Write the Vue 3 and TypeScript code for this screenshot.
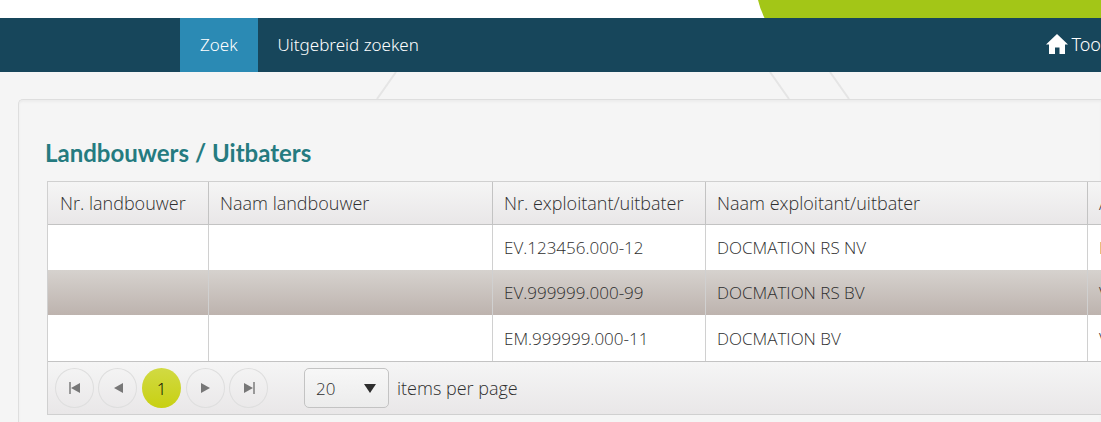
<script setup lang="ts">
import { ref } from 'vue'

interface Operator {
  id: string
  name: string
  address: string
}

const operators: Operator[] = [
  { id: 'EV.123456.000-12', name: 'DOCMATION RS NV', address: 'L' },
  { id: 'EV.999999.000-99', name: 'DOCMATION RS BV', address: 'V' },
  { id: 'EM.999999.000-11', name: 'DOCMATION BV', address: 'V' },
]

const selected = ref(1)
const pageSize = ref(20)
</script>

<template>
  <div class="page">
    <div class="brand" aria-hidden="true">
      <svg class="brand-shape" width="344" height="18" viewBox="0 0 344 18">
        <path d="M1 0H344V18H7.500Q3 9 1 0Z" fill="#a3c617" />
      </svg>
    </div>

    <nav class="nav">
      <a class="nav-link active" href="#zoek">Zoek</a>
      <a class="nav-link" href="#uitgebreid">Uitgebreid zoeken</a>
      <a class="nav-home" href="#home">
        <svg width="22" height="20" viewBox="0 0 22 20" aria-hidden="true">
          <path d="M11 0L22 10.500H19V20H13.500V13.500H9V20H3V10.500H0Z" fill="#fff" />
        </svg>
        <span>Too</span>
      </a>
    </nav>

    <div class="backdrop" aria-hidden="true">
      <svg width="480" height="27" viewBox="0 0 480 27" fill="none" stroke="#e5e5e5" stroke-width="2">
        <path d="M20 0L1 27M394 0L413 27M454 0L473 27" />
      </svg>
    </div>

    <main class="panel">
      <h1 class="title">Landbouwers / Uitbaters</h1>
      <div class="grid">
        <table class="table">
          <colgroup>
            <col class="c-nr" /><col class="c-farmer" /><col class="c-id" /><col class="c-name" /><col />
          </colgroup>
          <thead>
            <tr>
              <th scope="col">Nr. landbouwer</th>
              <th scope="col">Naam landbouwer</th>
              <th scope="col">Nr. exploitant/uitbater</th>
              <th scope="col">Naam exploitant/uitbater</th>
              <th scope="col">A</th>
            </tr>
          </thead>
          <tbody>
            <tr
              v-for="(row, i) in operators"
              :key="row.id"
              :class="{ selected: i === selected }"
              @click="selected = i"
            >
              <td></td>
              <td></td>
              <td>{{ row.id }}</td>
              <td>{{ row.name }}</td>
              <td>{{ row.address }}</td>
            </tr>
          </tbody>
        </table>

        <div class="pager">
          <div class="pages">
            <button class="page-btn" type="button" aria-label="Eerste pagina">
              <svg width="12" height="12" viewBox="0 0 12 12"><path d="M1 0V12" stroke="#999" stroke-width="2" /><path d="M11 1V11L2 6Z" fill="#777" /></svg>
            </button>
            <button class="page-btn" type="button" aria-label="Vorige pagina">
              <svg width="12" height="12" viewBox="0 0 12 12"><path d="M11 1V11L2 6Z" fill="#777" /></svg>
            </button>
            <button class="page-btn current" type="button" aria-current="page">1</button>
            <button class="page-btn" type="button" aria-label="Volgende pagina">
              <svg width="12" height="12" viewBox="0 0 12 12"><path d="M1 1V11L10 6Z" fill="#777" /></svg>
            </button>
            <button class="page-btn" type="button" aria-label="Laatste pagina">
              <svg width="12" height="12" viewBox="0 0 12 12"><path d="M11 0V12" stroke="#999" stroke-width="2" /><path d="M1 1V11L10 6Z" fill="#777" /></svg>
            </button>
          </div>
          <div class="select-wrap">
            <select id="page-size" v-model="pageSize" class="select">
              <option :value="20">20</option>
            </select>
            <svg class="caret" width="12" height="9" viewBox="0 0 12 9" aria-hidden="true"><path d="M0 0H12L6 9Z" fill="#2e2e2e" /></svg>
          </div>
          <label class="pager-label" for="page-size">items per page</label>
        </div>
      </div>
    </main>
  </div>
</template>

<style>
body {
  margin: 0;
  background: #f5f5f5;
}
</style>

<style scoped>
.page {
  display: flex;
  flex-direction: column;
  min-height: 100vh;
  overflow: hidden;
  color: #2e2e2e;
  font-family: "Open Sans", "Noto Sans", sans-serif;
  font-size: 17px;
  font-weight: 300;
}
.brand {
  display: flex;
  justify-content: flex-end;
  background: #fff;
}
.brand-shape {
  display: block;
}
.nav {
  display: flex;
  height: 54px;
  padding-left: 180px;
  background: #17465b;
}
.nav-link,
.nav-home {
  display: flex;
  align-items: center;
  box-sizing: border-box;
  padding-bottom: 2px;
  color: #fff;
  font-family: "Noto Sans", "Open Sans", sans-serif;
  text-decoration: none;
}
.nav-link {
  padding-right: 20px;
  padding-left: 20px;
}
.nav-link.active {
  background: #2b8ab4;
}
.nav-home {
  gap: 3px;
  margin-left: auto;
  font-size: 18px;
}
.backdrop {
  height: 27px;
  padding-left: 376px;
}
.backdrop svg {
  display: block;
}
.panel {
  flex: 1;
  margin-left: 18px;
  padding: 39px 0 7px 28px;
  border: 1px solid #dedede;
  border-width: 1px 0 0 1px;
  border-radius: 5px 0 0 0;
  box-shadow: inset 0 2px 2px #ececec;
}
.title {
  margin: 0 0 14px -2px;
  color: #257b80;
  font-family: Lato, "Open Sans", sans-serif;
  font-size: 24px;
  font-weight: 700;
  line-height: 28px;
}
.grid {
  border: 1px solid #d0d0d0;
  border-right: 0;
}
.table {
  width: 100%;
  table-layout: fixed;
  border-collapse: separate;
  border-spacing: 0;
}
.c-nr { width: 160px; }
.c-farmer { width: 284px; }
.c-id { width: 213px; }
.c-name { width: 382px; }
th,
td {
  box-sizing: border-box;
  height: 45px;
  padding: 0 0 0 11px;
  overflow: hidden;
  border-left: 1px solid #d0d0d0;
  font-weight: 300;
  text-align: left;
  white-space: nowrap;
}
th {
  height: 43px;
  border-left-color: #c3c3c3;
  border-bottom: 1px solid #c3c3c3;
  background: linear-gradient(#f5f5f5, #e9e7e8);
  font-size: 18px;
}
th:first-child,
td:first-child {
  padding-left: 12px;
  border-left: 0;
}
tbody tr {
  background: #fff;
}
tbody tr:last-child td {
  height: 46px;
}
tbody tr.selected {
  background: linear-gradient(#d6d2ce, #bdb3ae);
}
.pager {
  display: flex;
  align-items: center;
  height: 52px;
  padding-left: 7px;
  border-top: 1px solid #c3c3c3;
  background: linear-gradient(#f5f5f5, #e9e7e8);
}
.pages {
  display: flex;
  gap: 4px;
}
.page-btn {
  display: flex;
  align-items: center;
  justify-content: center;
  width: 39px;
  height: 40px;
  padding: 0;
  border: 1px solid #dedede;
  border-radius: 50%;
  background: none;
  color: #000;
  font: inherit;
}
.page-btn.current {
  margin: 0 1px;
  border: 0;
  background: linear-gradient(#d1da43, #c8d012);
}
.select-wrap {
  position: relative;
  margin-left: 36px;
}
.select {
  appearance: none;
  display: block;
  width: 85px;
  height: 40px;
  padding: 0 11px;
  border: 1px solid #c3c3c3;
  border-radius: 5px;
  background: linear-gradient(#f7f7f7, #ececec);
  color: inherit;
  font: inherit;
}
.caret {
  position: absolute;
  top: 16px;
  right: 13px;
  pointer-events: none;
}
.pager-label {
  margin-left: 8px;
  font-size: 18px;
}
</style>
